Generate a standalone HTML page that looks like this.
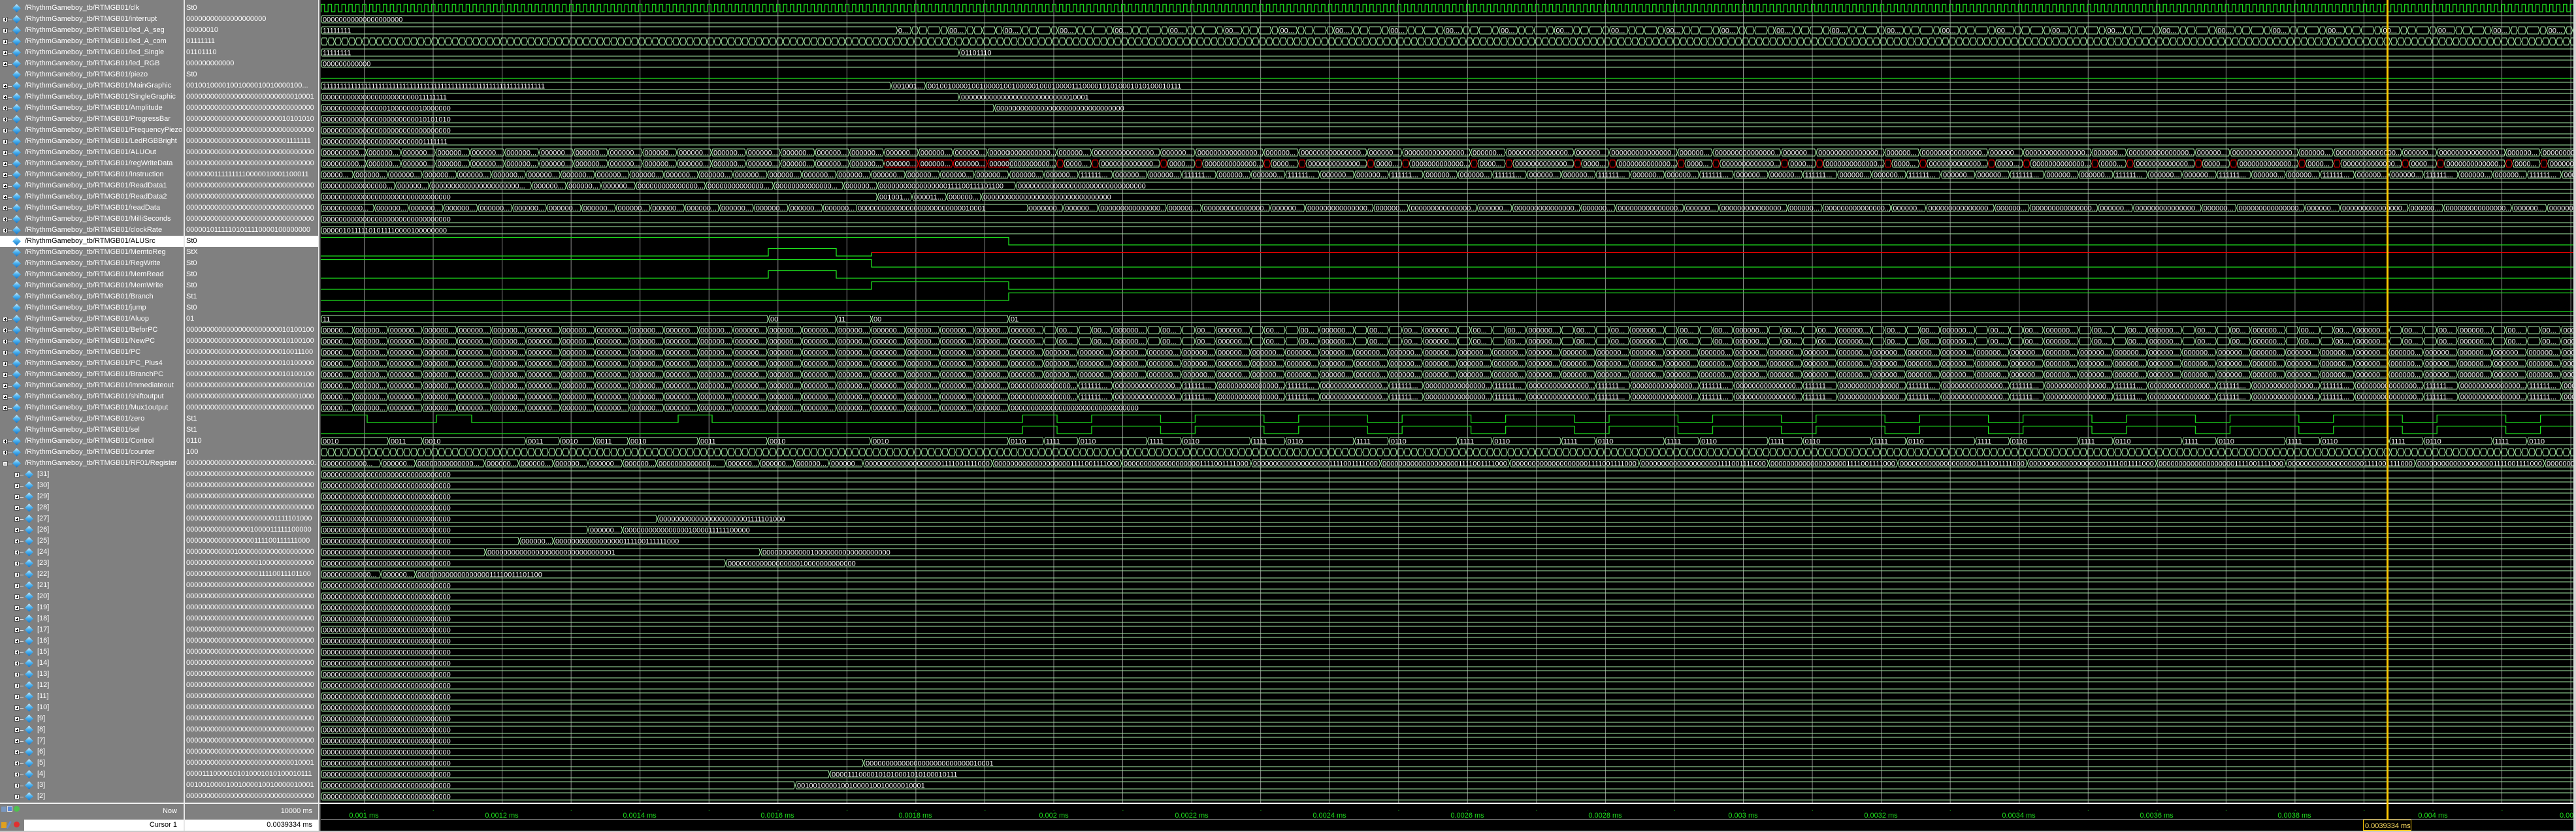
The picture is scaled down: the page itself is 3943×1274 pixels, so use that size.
<!DOCTYPE html>
<html><head><meta charset="utf-8">
<style>
*{margin:0;padding:0;box-sizing:border-box}
body{width:3943px;height:1274px;background:#808080;position:relative;overflow:hidden;font-family:"Liberation Sans",sans-serif}
.np{position:absolute;left:0;top:0;width:281px;height:1229px;background:#808080}
.vp{position:absolute;left:283px;top:0;width:204px;height:1229px;background:#808080}
.sep1{position:absolute;left:281px;top:0;width:2px;height:1274px;background:#e8e8e8}
.sep2{position:absolute;left:487px;top:0;width:2px;height:1274px;background:#e8e8e8}
.sep3{position:absolute;left:489px;top:0;width:2px;height:1274px;background:#404040}
.r{position:absolute;left:0;width:281px;height:17px}
.r span{position:absolute;left:38px;top:1px;font-size:11px;line-height:15px;color:#fff;white-space:nowrap}
.r.s span{left:57px}
.p{position:absolute;left:4px;top:5px;width:8px;height:8px;background:#fff;border:1px solid #555}
.p::before{content:"";position:absolute;left:1px;top:2.5px;width:4px;height:1px;background:#000}
.p::after{content:"";position:absolute;left:2.5px;top:1px;width:1px;height:4px;background:#000}
.p.m::after{display:none}
.p i{position:absolute;left:7px;top:3px;width:6px;height:1px;background:#ddd}
.s .p{left:22px}
.d{position:absolute;left:21px;top:4px;width:9px;height:9px;transform:rotate(45deg);background:linear-gradient(135deg,#d8f2ff 0%,#4db3f0 45%,#1673c4 100%)}
.s .d{left:40px}
.v{position:absolute;left:285px;width:200px;height:17px;font-size:11px;line-height:15px;color:#fff;white-space:nowrap;overflow:hidden;padding-top:1px}
.sel{background:#fff}
.sel span{color:#000!important}
.vsel{background:#fff;color:#000;left:283px;width:204px;padding-left:2px}
.bot{position:absolute;left:0;width:3943px}
svg{position:absolute;left:0;top:0}
.t{font-family:"Liberation Sans",sans-serif;font-size:11px;fill:#fff}
.b{fill:none;stroke:#a8eea8;stroke-width:1}
.rd{fill:none;stroke:#f00000;stroke-width:1}
.g{fill:none;stroke:#1ee01e;stroke-width:1.3}
</style></head><body>
<div class="np"></div><div class="vp"></div>

<!-- names -->
<div class="r" style="top:4px"><i class="d"></i><span>/RhythmGameboy_tb/RTMGB01/clk</span></div>
<div class="r" style="top:21px"><i class="p"><i></i></i><i class="d"></i><span>/RhythmGameboy_tb/RTMGB01/interrupt</span></div>
<div class="r" style="top:38px"><i class="p"><i></i></i><i class="d"></i><span>/RhythmGameboy_tb/RTMGB01/led_A_seg</span></div>
<div class="r" style="top:55px"><i class="p"><i></i></i><i class="d"></i><span>/RhythmGameboy_tb/RTMGB01/led_A_com</span></div>
<div class="r" style="top:72px"><i class="p"><i></i></i><i class="d"></i><span>/RhythmGameboy_tb/RTMGB01/led_Single</span></div>
<div class="r" style="top:89px"><i class="p"><i></i></i><i class="d"></i><span>/RhythmGameboy_tb/RTMGB01/led_RGB</span></div>
<div class="r" style="top:106px"><i class="d"></i><span>/RhythmGameboy_tb/RTMGB01/piezo</span></div>
<div class="r" style="top:123px"><i class="p"><i></i></i><i class="d"></i><span>/RhythmGameboy_tb/RTMGB01/MainGraphic</span></div>
<div class="r" style="top:140px"><i class="p"><i></i></i><i class="d"></i><span>/RhythmGameboy_tb/RTMGB01/SingleGraphic</span></div>
<div class="r" style="top:157px"><i class="p"><i></i></i><i class="d"></i><span>/RhythmGameboy_tb/RTMGB01/Amplitude</span></div>
<div class="r" style="top:174px"><i class="p"><i></i></i><i class="d"></i><span>/RhythmGameboy_tb/RTMGB01/ProgressBar</span></div>
<div class="r" style="top:191px"><i class="p"><i></i></i><i class="d"></i><span>/RhythmGameboy_tb/RTMGB01/FrequencyPiezo</span></div>
<div class="r" style="top:208px"><i class="p"><i></i></i><i class="d"></i><span>/RhythmGameboy_tb/RTMGB01/LedRGBBright</span></div>
<div class="r" style="top:225px"><i class="p"><i></i></i><i class="d"></i><span>/RhythmGameboy_tb/RTMGB01/ALUOut</span></div>
<div class="r" style="top:242px"><i class="p"><i></i></i><i class="d"></i><span>/RhythmGameboy_tb/RTMGB01/regWriteData</span></div>
<div class="r" style="top:259px"><i class="p"><i></i></i><i class="d"></i><span>/RhythmGameboy_tb/RTMGB01/Instruction</span></div>
<div class="r" style="top:276px"><i class="p"><i></i></i><i class="d"></i><span>/RhythmGameboy_tb/RTMGB01/ReadData1</span></div>
<div class="r" style="top:293px"><i class="p"><i></i></i><i class="d"></i><span>/RhythmGameboy_tb/RTMGB01/ReadData2</span></div>
<div class="r" style="top:310px"><i class="p"><i></i></i><i class="d"></i><span>/RhythmGameboy_tb/RTMGB01/readData</span></div>
<div class="r" style="top:327px"><i class="p"><i></i></i><i class="d"></i><span>/RhythmGameboy_tb/RTMGB01/MilliSeconds</span></div>
<div class="r" style="top:344px"><i class="p"><i></i></i><i class="d"></i><span>/RhythmGameboy_tb/RTMGB01/clockRate</span></div>
<div class="r sel" style="top:361px"><i class="d"></i><span>/RhythmGameboy_tb/RTMGB01/ALUSrc</span></div>
<div class="r" style="top:378px"><i class="d"></i><span>/RhythmGameboy_tb/RTMGB01/MemtoReg</span></div>
<div class="r" style="top:395px"><i class="d"></i><span>/RhythmGameboy_tb/RTMGB01/RegWrite</span></div>
<div class="r" style="top:412px"><i class="d"></i><span>/RhythmGameboy_tb/RTMGB01/MemRead</span></div>
<div class="r" style="top:429px"><i class="d"></i><span>/RhythmGameboy_tb/RTMGB01/MemWrite</span></div>
<div class="r" style="top:446px"><i class="d"></i><span>/RhythmGameboy_tb/RTMGB01/Branch</span></div>
<div class="r" style="top:463px"><i class="d"></i><span>/RhythmGameboy_tb/RTMGB01/jump</span></div>
<div class="r" style="top:480px"><i class="p"><i></i></i><i class="d"></i><span>/RhythmGameboy_tb/RTMGB01/Aluop</span></div>
<div class="r" style="top:497px"><i class="p"><i></i></i><i class="d"></i><span>/RhythmGameboy_tb/RTMGB01/BeforPC</span></div>
<div class="r" style="top:514px"><i class="p"><i></i></i><i class="d"></i><span>/RhythmGameboy_tb/RTMGB01/NewPC</span></div>
<div class="r" style="top:531px"><i class="p"><i></i></i><i class="d"></i><span>/RhythmGameboy_tb/RTMGB01/PC</span></div>
<div class="r" style="top:548px"><i class="p"><i></i></i><i class="d"></i><span>/RhythmGameboy_tb/RTMGB01/PC_Plus4</span></div>
<div class="r" style="top:565px"><i class="p"><i></i></i><i class="d"></i><span>/RhythmGameboy_tb/RTMGB01/BranchPC</span></div>
<div class="r" style="top:582px"><i class="p"><i></i></i><i class="d"></i><span>/RhythmGameboy_tb/RTMGB01/immediateout</span></div>
<div class="r" style="top:599px"><i class="p"><i></i></i><i class="d"></i><span>/RhythmGameboy_tb/RTMGB01/shiftoutput</span></div>
<div class="r" style="top:616px"><i class="p"><i></i></i><i class="d"></i><span>/RhythmGameboy_tb/RTMGB01/Mux1output</span></div>
<div class="r" style="top:633px"><i class="d"></i><span>/RhythmGameboy_tb/RTMGB01/zero</span></div>
<div class="r" style="top:650px"><i class="d"></i><span>/RhythmGameboy_tb/RTMGB01/sel</span></div>
<div class="r" style="top:667px"><i class="p"><i></i></i><i class="d"></i><span>/RhythmGameboy_tb/RTMGB01/Control</span></div>
<div class="r" style="top:684px"><i class="p"><i></i></i><i class="d"></i><span>/RhythmGameboy_tb/RTMGB01/counter</span></div>
<div class="r" style="top:701px"><i class="p m"><i></i></i><i class="d"></i><span>/RhythmGameboy_tb/RTMGB01/RF01/Register</span></div>
<div class="r s" style="top:718px"><i class="p"><i></i></i><i class="d"></i><span>[31]</span></div>
<div class="r s" style="top:735px"><i class="p"><i></i></i><i class="d"></i><span>[30]</span></div>
<div class="r s" style="top:752px"><i class="p"><i></i></i><i class="d"></i><span>[29]</span></div>
<div class="r s" style="top:769px"><i class="p"><i></i></i><i class="d"></i><span>[28]</span></div>
<div class="r s" style="top:786px"><i class="p"><i></i></i><i class="d"></i><span>[27]</span></div>
<div class="r s" style="top:803px"><i class="p"><i></i></i><i class="d"></i><span>[26]</span></div>
<div class="r s" style="top:820px"><i class="p"><i></i></i><i class="d"></i><span>[25]</span></div>
<div class="r s" style="top:837px"><i class="p"><i></i></i><i class="d"></i><span>[24]</span></div>
<div class="r s" style="top:854px"><i class="p"><i></i></i><i class="d"></i><span>[23]</span></div>
<div class="r s" style="top:871px"><i class="p"><i></i></i><i class="d"></i><span>[22]</span></div>
<div class="r s" style="top:888px"><i class="p"><i></i></i><i class="d"></i><span>[21]</span></div>
<div class="r s" style="top:905px"><i class="p"><i></i></i><i class="d"></i><span>[20]</span></div>
<div class="r s" style="top:922px"><i class="p"><i></i></i><i class="d"></i><span>[19]</span></div>
<div class="r s" style="top:939px"><i class="p"><i></i></i><i class="d"></i><span>[18]</span></div>
<div class="r s" style="top:956px"><i class="p"><i></i></i><i class="d"></i><span>[17]</span></div>
<div class="r s" style="top:973px"><i class="p"><i></i></i><i class="d"></i><span>[16]</span></div>
<div class="r s" style="top:990px"><i class="p"><i></i></i><i class="d"></i><span>[15]</span></div>
<div class="r s" style="top:1007px"><i class="p"><i></i></i><i class="d"></i><span>[14]</span></div>
<div class="r s" style="top:1024px"><i class="p"><i></i></i><i class="d"></i><span>[13]</span></div>
<div class="r s" style="top:1041px"><i class="p"><i></i></i><i class="d"></i><span>[12]</span></div>
<div class="r s" style="top:1058px"><i class="p"><i></i></i><i class="d"></i><span>[11]</span></div>
<div class="r s" style="top:1075px"><i class="p"><i></i></i><i class="d"></i><span>[10]</span></div>
<div class="r s" style="top:1092px"><i class="p"><i></i></i><i class="d"></i><span>[9]</span></div>
<div class="r s" style="top:1109px"><i class="p"><i></i></i><i class="d"></i><span>[8]</span></div>
<div class="r s" style="top:1126px"><i class="p"><i></i></i><i class="d"></i><span>[7]</span></div>
<div class="r s" style="top:1143px"><i class="p"><i></i></i><i class="d"></i><span>[6]</span></div>
<div class="r s" style="top:1160px"><i class="p"><i></i></i><i class="d"></i><span>[5]</span></div>
<div class="r s" style="top:1177px"><i class="p"><i></i></i><i class="d"></i><span>[4]</span></div>
<div class="r s" style="top:1194px"><i class="p"><i></i></i><i class="d"></i><span>[3]</span></div>
<div class="r s" style="top:1211px"><i class="p"><i></i></i><i class="d"></i><span>[2]</span></div>

<!-- values -->
<div class="v" style="top:4px">St0</div>
<div class="v" style="top:21px">00000000000000000000</div>
<div class="v" style="top:38px">00000010</div>
<div class="v" style="top:55px">01111111</div>
<div class="v" style="top:72px">01101110</div>
<div class="v" style="top:89px">000000000000</div>
<div class="v" style="top:106px">St0</div>
<div class="v" style="top:123px">00100100001001000010010000100...</div>
<div class="v" style="top:140px">00000000000000000000000000010001</div>
<div class="v" style="top:157px">00000000000000000000000000000000</div>
<div class="v" style="top:174px">00000000000000000000000010101010</div>
<div class="v" style="top:191px">00000000000000000000000000000000</div>
<div class="v" style="top:208px">00000000000000000000000001111111</div>
<div class="v" style="top:225px">00000000000000000000000000000000</div>
<div class="v" style="top:242px">00000000000000000000000000000000</div>
<div class="v" style="top:259px">00000001111111110000010001100011</div>
<div class="v" style="top:276px">00000000000000000000000000000000</div>
<div class="v" style="top:293px">00000000000000000000000000000000</div>
<div class="v" style="top:310px">00000000000000000000000000000000</div>
<div class="v" style="top:327px">00000000000000000000000000000000</div>
<div class="v" style="top:344px">00000101111101011110000100000000</div>
<div class="v vsel" style="top:361px">St0</div>
<div class="v" style="top:378px">StX</div>
<div class="v" style="top:395px">St0</div>
<div class="v" style="top:412px">St0</div>
<div class="v" style="top:429px">St0</div>
<div class="v" style="top:446px">St1</div>
<div class="v" style="top:463px">St0</div>
<div class="v" style="top:480px">01</div>
<div class="v" style="top:497px">00000000000000000000000010100100</div>
<div class="v" style="top:514px">00000000000000000000000010100100</div>
<div class="v" style="top:531px">00000000000000000000000010011100</div>
<div class="v" style="top:548px">00000000000000000000000010100000</div>
<div class="v" style="top:565px">00000000000000000000000010100100</div>
<div class="v" style="top:582px">00000000000000000000000000000100</div>
<div class="v" style="top:599px">00000000000000000000000000001000</div>
<div class="v" style="top:616px">00000000000000000000000000000000</div>
<div class="v" style="top:633px">St1</div>
<div class="v" style="top:650px">St1</div>
<div class="v" style="top:667px">0110</div>
<div class="v" style="top:684px">100</div>
<div class="v" style="top:701px">00000000000000000000000000000000...</div>
<div class="v" style="top:718px">00000000000000000000000000000000</div>
<div class="v" style="top:735px">00000000000000000000000000000000</div>
<div class="v" style="top:752px">00000000000000000000000000000000</div>
<div class="v" style="top:769px">00000000000000000000000000000000</div>
<div class="v" style="top:786px">00000000000000000000001111101000</div>
<div class="v" style="top:803px">00000000000000001000011111100000</div>
<div class="v" style="top:820px">00000000000000000111100111111000</div>
<div class="v" style="top:837px">00000000000010000000000000000000</div>
<div class="v" style="top:854px">00000000000000000010000000000000</div>
<div class="v" style="top:871px">00000000000000000011110011101100</div>
<div class="v" style="top:888px">00000000000000000000000000000000</div>
<div class="v" style="top:905px">00000000000000000000000000000000</div>
<div class="v" style="top:922px">00000000000000000000000000000000</div>
<div class="v" style="top:939px">00000000000000000000000000000000</div>
<div class="v" style="top:956px">00000000000000000000000000000000</div>
<div class="v" style="top:973px">00000000000000000000000000000000</div>
<div class="v" style="top:990px">00000000000000000000000000000000</div>
<div class="v" style="top:1007px">00000000000000000000000000000000</div>
<div class="v" style="top:1024px">00000000000000000000000000000000</div>
<div class="v" style="top:1041px">00000000000000000000000000000000</div>
<div class="v" style="top:1058px">00000000000000000000000000000000</div>
<div class="v" style="top:1075px">00000000000000000000000000000000</div>
<div class="v" style="top:1092px">00000000000000000000000000000000</div>
<div class="v" style="top:1109px">00000000000000000000000000000000</div>
<div class="v" style="top:1126px">00000000000000000000000000000000</div>
<div class="v" style="top:1143px">00000000000000000000000000000000</div>
<div class="v" style="top:1160px">00000000000000000000000000010001</div>
<div class="v" style="top:1177px">00001110000101010001010100010111</div>
<div class="v" style="top:1194px">00100100001001000010010000010001</div>
<div class="v" style="top:1211px">00000000000000000000000000000000</div>

<div class="sep1"></div><div class="sep2"></div><div class="sep3"></div>

<!-- bottom left -->
<div class="bot" style="top:1229px;height:2px;background:#f0f0f0"></div>
<div style="position:absolute;left:0;top:1231px;width:281px;height:23px;background:#808080"></div>
<div style="position:absolute;left:0;top:1236px;width:271px;text-align:right;font-size:11px;color:#fff">Now</div>
<div style="position:absolute;left:283px;top:1231px;width:204px;height:23px;background:#808080"></div>
<div style="position:absolute;left:283px;top:1236px;width:195px;text-align:right;font-size:11px;color:#fff">10000 ms</div>
<div style="position:absolute;left:2px;top:1235px;width:8px;height:8px;background:#7a98c0"></div>
<div style="position:absolute;left:11px;top:1234px;width:8px;height:9px;background:#5a88d8;border:1px solid #ddd"></div>
<div style="position:absolute;left:21px;top:1234px;width:9px;height:9px;border-radius:50%;background:#50c050"></div>
<div style="position:absolute;left:0;top:1254px;width:281px;height:18px;background:#808080"></div>
<div style="position:absolute;left:2px;top:1259px;width:8px;height:9px;background:#e0a020"></div>
<div style="position:absolute;left:12px;top:1257px;width:3px;height:12px;background:#6688cc;transform:rotate(30deg)"></div>
<div style="position:absolute;left:21px;top:1258px;width:9px;height:9px;border-radius:50%;background:#e03030"></div>
<div style="position:absolute;left:37px;top:1255px;width:244px;height:17px;background:#fff"></div>
<div style="position:absolute;left:37px;top:1257px;width:234px;text-align:right;font-size:11px;color:#000">Cursor 1</div>
<div style="position:absolute;left:283px;top:1255px;width:204px;height:17px;background:#fff"></div>
<div style="position:absolute;left:283px;top:1257px;width:195px;text-align:right;font-size:11px;color:#000">0.0039334 ms</div>
<div class="bot" style="top:1272px;height:2px;background:#c8c8c8"></div>

<svg width="3943" height="1274" viewBox="0 0 3943 1274" style="left:0;top:0">
<defs>
<clipPath id="wc"><rect x="491" y="0" width="3448" height="1229"/></clipPath>
<pattern id="pGrid" patternUnits="userSpaceOnUse" x="557" y="0" width="105.55" height="1229"><rect x="0" y="0" width="1" height="1229" fill="#8c8c8c"/></pattern>
<pattern id="pClk" patternUnits="userSpaceOnUse" x="491" y="0" width="10.56" height="17"><path class="g" d="M-1,14H0.6V2.5H5.9V14H12"/></pattern>
<pattern id="pCom" patternUnits="userSpaceOnUse" x="491" y="0" width="10.56" height="17"><path class="b" d="M0.5,8.5L2,3H8.56L10.06,8.5L8.56,14H2Z"/></pattern>
<pattern id="pA" patternUnits="userSpaceOnUse" x="561" y="0" width="52.8" height="17"><path class="b" d="M0.5,8.5L2,3H50.8L52.3,8.5L50.8,14H2Z"/><text class="t" x="3" y="12.3">000000...</text></pattern>
<pattern id="pARed" patternUnits="userSpaceOnUse" x="561" y="0" width="52.8" height="17"><path class="rd" d="M0.5,8.5L2,3H50.8L52.3,8.5L50.8,14H2Z"/><text class="t" x="3" y="12.3">000000...</text></pattern>
<pattern id="pB" patternUnits="userSpaceOnUse" x="541" y="0" width="52.8" height="17"><path class="b" d="M0.5,8.5L2,3H50.8L52.3,8.5L50.8,14H2Z"/><text class="t" x="3" y="12.3">000000...</text></pattern>
<pattern id="pC" patternUnits="userSpaceOnUse" x="573" y="0" width="52.8" height="17"><path class="b" d="M0.5,8.5L2,3H50.8L52.3,8.5L50.8,14H2Z"/><text class="t" x="3" y="12.3">000000...</text></pattern>
<pattern id="pSeg" patternUnits="userSpaceOnUse" x="2547.3" y="0" width="84.4" height="17"><path class="b" d="M0.5,8.5L2,3H27.5L29,8.5L27.5,14H2Z M30,8.5L31.5,3H38.2L39.7,8.5L38.2,14H31.5Z M40.7,8.5L42.2,3H51.6L53.1,8.5L51.6,14H42.2Z M54.1,8.5L55.6,3H72.1L73.6,8.5L72.1,14H55.6Z M74.6,8.5L76.1,3H82.4L83.9,8.5L82.4,14H76.1Z"/><text class="t" x="3" y="12.3">00...</text></pattern>
<pattern id="pR13" patternUnits="userSpaceOnUse" x="2567.8" y="0" width="158.4" height="17"><path class="b" d="M0.5,8.5L2,3H51.6L53.1,8.5L51.6,14H2Z M54.1,8.5L55.6,3H156.4L157.9,8.5L156.4,14H55.6Z"/><text class="t" x="3" y="12.3">000000...</text><text class="t" x="57" y="12.3">000000000000000...</text></pattern>
<pattern id="pR14" patternUnits="userSpaceOnUse" x="2567.8" y="0" width="158.4" height="17"><path class="rd" d="M0.5,8.5L2,3H8.7L10.2,8.5L8.7,14H2Z M54.1,8.5L55.6,3H62.3L63.8,8.5L62.3,14H55.6Z"/><path class="b" d="M11.2,8.5L12.7,3H51.6L53.1,8.5L51.6,14H12.7Z M64.8,8.5L66.3,3H156.4L157.9,8.5L156.4,14H66.3Z"/><text class="t" x="14" y="12.3">0000...</text><text class="t" x="68" y="12.3">0000000000000...</text></pattern>
<pattern id="pR15" patternUnits="userSpaceOnUse" x="2548.2" y="0" width="158.4" height="17"><path class="b" d="M0.5,8.5L2,3H50.8L52.3,8.5L50.8,14H2Z M53.3,8.5L54.8,3H103.6L105.1,8.5L103.6,14H54.8Z M106.1,8.5L107.6,3H156.4L157.9,8.5L156.4,14H107.6Z"/><text class="t" x="3" y="12.3">000000...</text><text class="t" x="56" y="12.3">111111...</text><text class="t" x="109" y="12.3">000000...</text></pattern>
<pattern id="pR18" patternUnits="userSpaceOnUse" x="2577.7" y="0" width="158.4" height="17"><path class="b" d="M0.5,8.5L2,3H51.6L53.1,8.5L51.6,14H2Z M54.1,8.5L55.6,3H156.4L157.9,8.5L156.4,14H55.6Z"/><text class="t" x="3" y="12.3">000000...</text><text class="t" x="57" y="12.3">000000000000000...</text></pattern>
<pattern id="pR29" patternUnits="userSpaceOnUse" x="2548.2" y="0" width="158.4" height="17"><path class="b" d="M0.5,8.5L2,3H17.6L19.1,8.5L17.6,14H2Z M20.1,8.5L21.6,3H50.8L52.3,8.5L50.8,14H21.6Z M53.3,8.5L54.8,3H71.2L72.7,8.5L71.2,14H54.8Z M73.7,8.5L75.2,3H102.5L104,8.5L102.5,14H75.2Z M105,8.5L106.5,3H156.4L157.9,8.5L156.4,14H106.5Z"/><text class="t" x="23" y="12.3">00...</text><text class="t" x="76" y="12.3">00...</text><text class="t" x="108" y="12.3">000000...</text></pattern>
<pattern id="pR34" patternUnits="userSpaceOnUse" x="2601" y="0" width="158.4" height="17"><path class="b" d="M0.5,8.5L2,3H50.8L52.3,8.5L50.8,14H2Z M53.3,8.5L54.8,3H156.4L157.9,8.5L156.4,14H54.8Z"/><text class="t" x="3" y="12.3">111111...</text><text class="t" x="56" y="12.3">000000000000000...</text></pattern>
<pattern id="pR37" patternUnits="userSpaceOnUse" x="2567.8" y="0" width="158.4" height="17"><path class="g" d="M-1,2.5H0.6V14H53.6V2.5H160"/></pattern>
<pattern id="pR39" patternUnits="userSpaceOnUse" x="2548.2" y="0" width="158.4" height="17"><path class="b" d="M0.5,8.5L2,3H50.8L52.3,8.5L50.8,14H2Z M53.3,8.5L54.8,3H156.4L157.9,8.5L156.4,14H54.8Z"/><text class="t" x="3" y="12.3">1111</text><text class="t" x="56" y="12.3">0110</text></pattern>
<pattern id="pR41" patternUnits="userSpaceOnUse" x="1321" y="0" width="198" height="17"><path class="b" d="M0.5,8.5L2,3H196L197.5,8.5L196,14H2Z"/><text class="t" x="3" y="12.3">00000000000000000001111001111000</text></pattern>
<pattern id="pMin" patternUnits="userSpaceOnUse" x="557" y="0" width="21.11" height="20"><rect x="0" y="0" width="1" height="4" fill="#1ee01e"/></pattern>
<pattern id="pMaj" patternUnits="userSpaceOnUse" x="557" y="0" width="105.55" height="20"><rect x="0" y="0" width="1.5" height="9" fill="#1ee01e"/></pattern>
</defs>

<rect x="491" y="0" width="3448" height="1229" fill="#000"/>
<rect x="491" y="1231" width="3448" height="23" fill="#000"/>
<rect x="491" y="1254" width="3448" height="1" fill="#909090"/>
<rect x="491" y="1255" width="3448" height="17" fill="#000"/>
<rect x="3939" y="0" width="4" height="1274" fill="#d4d4d4"/>
<rect x="491" y="0" width="3448" height="1229" fill="url(#pGrid)"/>

<g clip-path="url(#wc)">
<g transform="translate(0,4)"><rect x="491" y="0" width="3448" height="17" fill="url(#pClk)"/></g>
<g transform="translate(0,21)"><path class="b" d="M491.5,8.5L493,3H3945V14H493Z"/><text class="t" x="494" y="12.3">00000000000000000000</text></g>
<g transform="translate(0,38)"><path class="b" d="M491.5,8.5L493,3H1372L1373.5,8.5L1372,14H493Z"/><text class="t" x="494" y="12.3">11111111</text><rect x="1374" y="0" width="2570" height="17" fill="url(#pSeg)"/></g>
<g transform="translate(0,55)"><rect x="491" y="0" width="3448" height="17" fill="url(#pCom)"/></g>
<g transform="translate(0,72)"><path class="b" d="M491.5,8.5L493,3H1466L1467.5,8.5L1466,14H493Z M1468.5,8.5L1470,3H3945V14H1470Z"/><text class="t" x="494" y="12.3">11111111</text><text class="t" x="1471" y="12.3">01101110</text></g>
<g transform="translate(0,89)"><path class="b" d="M491.5,8.5L493,3H3945V14H493Z"/><text class="t" x="494" y="12.3">000000000000</text></g>
<g transform="translate(0,106)"><path class="g" d="M491,14H3945"/></g>
<g transform="translate(0,123)"><path class="b" d="M491.5,8.5L493,3H1362L1363.5,8.5L1362,14H493Z M1364.5,8.5L1366,3H1415L1416.5,8.5L1415,14H1366Z M1417.5,8.5L1419,3H3945V14H1419Z"/><text class="t" x="494" y="12.3">1111111111111111111111111111111111111111111111111111111111111111</text><text class="t" x="1367" y="12.3">001001...</text><text class="t" x="1420" y="12.3">0010010000100100001001000001000100001110000101010001010100010111</text></g>
<g transform="translate(0,140)"><path class="b" d="M491.5,8.5L493,3H1466L1467.5,8.5L1466,14H493Z M1468.5,8.5L1470,3H3945V14H1470Z"/><text class="t" x="494" y="12.3">00000000000000000000000011111111</text><text class="t" x="1471" y="12.3">00000000000000000000000000010001</text></g>
<g transform="translate(0,157)"><path class="b" d="M491.5,8.5L493,3H1520L1521.5,8.5L1520,14H493Z M1522.5,8.5L1524,3H3945V14H1524Z"/><text class="t" x="494" y="12.3">00000000000000001000000010000000</text><text class="t" x="1525" y="12.3">00000000000000000000000000000000</text></g>
<g transform="translate(0,174)"><path class="b" d="M491.5,8.5L493,3H3945V14H493Z"/><text class="t" x="494" y="12.3">00000000000000000000000010101010</text></g>
<g transform="translate(0,191)"><path class="b" d="M491.5,8.5L493,3H3945V14H493Z"/><text class="t" x="494" y="12.3">00000000000000000000000000000000</text></g>
<g transform="translate(0,208)"><path class="b" d="M491.5,8.5L493,3H3945V14H493Z"/><text class="t" x="494" y="12.3">00000000000000000000000001111111</text></g>
<g transform="translate(0,225)"><path class="b" d="M491.5,8.5L493,3H559L560.5,8.5L559,14H493Z"/><text class="t" x="494" y="12.3">000000000...</text><rect x="561" y="0" width="983" height="17" fill="url(#pA)"/><rect x="1544" y="0" width="2395" height="17" fill="url(#pR13)"/></g>
<g transform="translate(0,242)"><path class="b" d="M491.5,8.5L493,3H559L560.5,8.5L559,14H493Z"/><text class="t" x="494" y="12.3">000000000...</text><rect x="561" y="0" width="793" height="17" fill="url(#pA)"/><rect x="1354" y="0" width="190" height="17" fill="url(#pARed)"/><rect x="1544" y="0" width="2395" height="17" fill="url(#pR14)"/></g>
<g transform="translate(0,259)"><path class="b" d="M491.5,8.5L493,3H539L540.5,8.5L539,14H493Z"/><text class="t" x="494" y="12.3">00000...</text><rect x="541" y="0" width="1003" height="17" fill="url(#pB)"/><rect x="1544" y="0" width="2395" height="17" fill="url(#pR15)"/></g>
<g transform="translate(0,276)"><path class="b" d="M491.5,8.5L493,3H603L604.5,8.5L603,14H493Z M605.5,8.5L607,3H655L656.5,8.5L655,14H607Z M657.5,8.5L659,3H812L813.5,8.5L812,14H659Z M814.5,8.5L816,3H865L866.5,8.5L865,14H816Z M867.5,8.5L869,3H918L919.5,8.5L918,14H869Z M920.5,8.5L922,3H971L972.5,8.5L971,14H922Z M973.5,8.5L975,3H1078L1079.5,8.5L1078,14H975Z M1080.5,8.5L1082,3H1182L1183.5,8.5L1182,14H1082Z M1184.5,8.5L1186,3H1289L1290.5,8.5L1289,14H1186Z M1291.5,8.5L1293,3H1341L1342.5,8.5L1341,14H1293Z M1343.5,8.5L1345,3H1553L1554.5,8.5L1553,14H1345Z M1555.5,8.5L1557,3H3945V14H1557Z"/><text class="t" x="494" y="12.3">0000000000000000...</text><text class="t" x="608" y="12.3">000000...</text><text class="t" x="660" y="12.3">0000000000000000000000...</text><text class="t" x="817" y="12.3">000000...</text><text class="t" x="870" y="12.3">000000...</text><text class="t" x="923" y="12.3">000000...</text><text class="t" x="976" y="12.3">000000000000000...</text><text class="t" x="1083" y="12.3">00000000000000...</text><text class="t" x="1187" y="12.3">00000000000000...</text><text class="t" x="1294" y="12.3">000000...</text><text class="t" x="1346" y="12.3">00000000000000000111100111101100</text><text class="t" x="1558" y="12.3">00000000000000000000000000000000</text></g>
<g transform="translate(0,293)"><path class="b" d="M491.5,8.5L493,3H1341L1342.5,8.5L1341,14H493Z M1343.5,8.5L1345,3H1394L1395.5,8.5L1394,14H1345Z M1396.5,8.5L1398,3H1447L1448.5,8.5L1447,14H1398Z M1449.5,8.5L1451,3H1500L1501.5,8.5L1500,14H1451Z M1502.5,8.5L1504,3H3945V14H1504Z"/><text class="t" x="494" y="12.3">00000000000000000000000000000000</text><text class="t" x="1346" y="12.3">001001...</text><text class="t" x="1399" y="12.3">000011...</text><text class="t" x="1452" y="12.3">000000...</text><text class="t" x="1505" y="12.3">00000000000000000000000000000000</text></g>
<g transform="translate(0,310)"><path class="b" d="M491.5,8.5L493,3H571L572.5,8.5L571,14H493Z M1310.5,8.5L1312,3H1572L1573.5,8.5L1572,14H1312Z"/><text class="t" x="494" y="12.3">0000000000...</text><rect x="573" y="0" width="737" height="17" fill="url(#pC)"/><text class="t" x="1313" y="12.3">00000000000000000000000000010001</text><rect x="1574" y="0" width="2365" height="17" fill="url(#pR18)"/></g>
<g transform="translate(0,327)"><path class="b" d="M491.5,8.5L493,3H3945V14H493Z"/><text class="t" x="494" y="12.3">00000000000000000000000000000000</text></g>
<g transform="translate(0,344)"><path class="b" d="M491.5,8.5L493,3H3945V14H493Z"/><text class="t" x="494" y="12.3">00000101111101011110000100000000</text></g>
<g transform="translate(0,361)"><path class="g" d="M491,2.5H1544V14H3945"/></g>
<g transform="translate(0,378)"><path class="g" d="M491,14H1176V2.5H1280V14H1334V8.5"/><path class="rd" d="M1334,8.5H3945"/></g>
<g transform="translate(0,395)"><path class="g" d="M491,2.5H1334V14H3945"/></g>
<g transform="translate(0,412)"><path class="g" d="M491,14H1176V2.5H1280V14H3945"/></g>
<g transform="translate(0,429)"><path class="g" d="M491,14H1334V2.5H1544V14H3945"/></g>
<g transform="translate(0,446)"><path class="g" d="M491,14H1544V2.5H3945"/></g>
<g transform="translate(0,463)"><path class="g" d="M491,14H3945"/></g>
<g transform="translate(0,480)"><path class="b" d="M491.5,8.5L493,3H1174L1175.5,8.5L1174,14H493Z M1176.5,8.5L1178,3H1278L1279.5,8.5L1278,14H1178Z M1280.5,8.5L1282,3H1332L1333.5,8.5L1332,14H1282Z M1334.5,8.5L1336,3H1542L1543.5,8.5L1542,14H1336Z M1544.5,8.5L1546,3H3945V14H1546Z"/><text class="t" x="494" y="12.3">11</text><text class="t" x="1179" y="12.3">00</text><text class="t" x="1283" y="12.3">11</text><text class="t" x="1337" y="12.3">00</text><text class="t" x="1547" y="12.3">01</text></g>
<g transform="translate(0,497)"><path class="b" d="M491.5,8.5L493,3H539L540.5,8.5L539,14H493Z"/><text class="t" x="494" y="12.3">00000...</text><rect x="541" y="0" width="1003" height="17" fill="url(#pB)"/><rect x="1544" y="0" width="2395" height="17" fill="url(#pR29)"/></g>
<g transform="translate(0,514)"><path class="b" d="M491.5,8.5L493,3H539L540.5,8.5L539,14H493Z"/><text class="t" x="494" y="12.3">00000...</text><rect x="541" y="0" width="1003" height="17" fill="url(#pB)"/><rect x="1544" y="0" width="2395" height="17" fill="url(#pR29)"/></g>
<g transform="translate(0,531)"><path class="b" d="M491.5,8.5L493,3H539L540.5,8.5L539,14H493Z"/><text class="t" x="494" y="12.3">00000...</text><rect x="541" y="0" width="3398" height="17" fill="url(#pB)"/></g>
<g transform="translate(0,548)"><path class="b" d="M491.5,8.5L493,3H539L540.5,8.5L539,14H493Z"/><text class="t" x="494" y="12.3">00000...</text><rect x="541" y="0" width="3398" height="17" fill="url(#pB)"/></g>
<g transform="translate(0,565)"><path class="b" d="M491.5,8.5L493,3H539L540.5,8.5L539,14H493Z"/><text class="t" x="494" y="12.3">00000...</text><rect x="541" y="0" width="3398" height="17" fill="url(#pB)"/></g>
<g transform="translate(0,582)"><path class="b" d="M491.5,8.5L493,3H539L540.5,8.5L539,14H493Z M1544.5,8.5L1546,3H1648L1649.5,8.5L1648,14H1546Z"/><text class="t" x="494" y="12.3">00000...</text><rect x="541" y="0" width="1003" height="17" fill="url(#pB)"/><text class="t" x="1547" y="12.3">000000000000000...</text><rect x="1650" y="0" width="2289" height="17" fill="url(#pR34)"/></g>
<g transform="translate(0,599)"><path class="b" d="M491.5,8.5L493,3H539L540.5,8.5L539,14H493Z M1544.5,8.5L1546,3H1648L1649.5,8.5L1648,14H1546Z"/><text class="t" x="494" y="12.3">00000...</text><rect x="541" y="0" width="1003" height="17" fill="url(#pB)"/><text class="t" x="1547" y="12.3">000000000000000...</text><rect x="1650" y="0" width="2289" height="17" fill="url(#pR34)"/></g>
<g transform="translate(0,616)"><path class="b" d="M491.5,8.5L493,3H539L540.5,8.5L539,14H493Z M1544.5,8.5L1546,3H3945V14H1546Z"/><text class="t" x="494" y="12.3">00000...</text><rect x="541" y="0" width="1003" height="17" fill="url(#pB)"/><text class="t" x="1547" y="12.3">00000000000000000000000000000000</text></g>
<g transform="translate(0,633)"><path class="g" d="M491,2.5H562V14H668V2.5H722V14H1038V2.5H1090V14H1565V2.5"/><rect x="1565" y="0" width="2374" height="17" fill="url(#pR37)"/></g>
<g transform="translate(0,650)"><path class="g" d="M491,14H1565V2.5"/><rect x="1565" y="0" width="2374" height="17" fill="url(#pR37)"/></g>
<g transform="translate(0,667)"><path class="b" d="M491.5,8.5L493,3H593L594.5,8.5L593,14H493Z M595.5,8.5L597,3H645L646.5,8.5L645,14H597Z M647.5,8.5L649,3H803L804.5,8.5L803,14H649Z M805.5,8.5L807,3H855L856.5,8.5L855,14H807Z M857.5,8.5L859,3H908L909.5,8.5L908,14H859Z M910.5,8.5L912,3H960L961.5,8.5L960,14H912Z M962.5,8.5L964,3H1067L1068.5,8.5L1067,14H964Z M1069.5,8.5L1071,3H1173L1174.5,8.5L1173,14H1071Z M1175.5,8.5L1177,3H1331L1332.5,8.5L1331,14H1177Z M1333.5,8.5L1335,3H1542L1543.5,8.5L1542,14H1335Z M1544.5,8.5L1546,3H1596L1597.5,8.5L1596,14H1546Z"/><text class="t" x="494" y="12.3">0010</text><text class="t" x="598" y="12.3">0011</text><text class="t" x="650" y="12.3">0010</text><text class="t" x="808" y="12.3">0011</text><text class="t" x="860" y="12.3">0010</text><text class="t" x="913" y="12.3">0011</text><text class="t" x="965" y="12.3">0010</text><text class="t" x="1072" y="12.3">0011</text><text class="t" x="1178" y="12.3">0010</text><text class="t" x="1336" y="12.3">0010</text><text class="t" x="1547" y="12.3">0110</text><rect x="1598" y="0" width="2341" height="17" fill="url(#pR39)"/></g>
<g transform="translate(0,684)"><rect x="491" y="0" width="3448" height="17" fill="url(#pCom)"/></g>
<g transform="translate(0,701)"><path class="b" d="M491.5,8.5L493,3H581L582.5,8.5L581,14H493Z M583.5,8.5L585,3H634L635.5,8.5L634,14H585Z M636.5,8.5L638,3H740L741.5,8.5L740,14H638Z M742.5,8.5L744,3H792L793.5,8.5L792,14H744Z M794.5,8.5L796,3H845L846.5,8.5L845,14H796Z M847.5,8.5L849,3H898L899.5,8.5L898,14H849Z M900.5,8.5L902,3H951L952.5,8.5L951,14H902Z M953.5,8.5L955,3H1003L1004.5,8.5L1003,14H955Z M1005.5,8.5L1007,3H1109L1110.5,8.5L1109,14H1007Z M1111.5,8.5L1113,3H1161L1162.5,8.5L1161,14H1113Z M1163.5,8.5L1165,3H1214L1215.5,8.5L1214,14H1165Z M1216.5,8.5L1218,3H1267L1268.5,8.5L1267,14H1218Z M1269.5,8.5L1271,3H1319L1320.5,8.5L1319,14H1271Z"/><text class="t" x="494" y="12.3">00000000000...</text><text class="t" x="586" y="12.3">000000...</text><text class="t" x="639" y="12.3">00000000000000...</text><text class="t" x="745" y="12.3">000000...</text><text class="t" x="797" y="12.3">000000...</text><text class="t" x="850" y="12.3">000000...</text><text class="t" x="903" y="12.3">000000...</text><text class="t" x="956" y="12.3">000000...</text><text class="t" x="1008" y="12.3">0000000000000...</text><text class="t" x="1114" y="12.3">000000...</text><text class="t" x="1166" y="12.3">000000...</text><text class="t" x="1219" y="12.3">000000...</text><text class="t" x="1272" y="12.3">000000...</text><rect x="1321" y="0" width="2618" height="17" fill="url(#pR41)"/></g>

<!-- registers -->
<g transform="translate(0,718)"><path class="b" d="M491.5,8.5L493,3H3945V14H493Z"/><text class="t" x="494" y="12.3">00000000000000000000000000000000</text></g>
<g transform="translate(0,735)"><path class="b" d="M491.5,8.5L493,3H3945V14H493Z"/><text class="t" x="494" y="12.3">00000000000000000000000000000000</text></g>
<g transform="translate(0,752)"><path class="b" d="M491.5,8.5L493,3H3945V14H493Z"/><text class="t" x="494" y="12.3">00000000000000000000000000000000</text></g>
<g transform="translate(0,769)"><path class="b" d="M491.5,8.5L493,3H3945V14H493Z"/><text class="t" x="494" y="12.3">00000000000000000000000000000000</text></g>
<g transform="translate(0,786)"><path class="b" d="M491.5,8.5L493,3H1004L1005.5,8.5L1004,14H493Z M1006.5,8.5L1008,3H3945V14H1008Z"/><text class="t" x="494" y="12.3">00000000000000000000000000000000</text><text class="t" x="1009" y="12.3">00000000000000000000001111101000</text></g>
<g transform="translate(0,803)"><path class="b" d="M491.5,8.5L493,3H898L899.5,8.5L898,14H493Z M900.5,8.5L902,3H951L952.5,8.5L951,14H902Z M953.5,8.5L955,3H3945V14H955Z"/><text class="t" x="494" y="12.3">00000000000000000000000000000000</text><text class="t" x="903" y="12.3">000000...</text><text class="t" x="956" y="12.3">00000000000000001000011111100000</text></g>
<g transform="translate(0,820)"><path class="b" d="M491.5,8.5L493,3H793L794.5,8.5L793,14H493Z M795.5,8.5L797,3H845L846.5,8.5L845,14H797Z M847.5,8.5L849,3H3945V14H849Z"/><text class="t" x="494" y="12.3">00000000000000000000000000000000</text><text class="t" x="798" y="12.3">000000...</text><text class="t" x="850" y="12.3">00000000000000000111100111111000</text></g>
<g transform="translate(0,837)"><path class="b" d="M491.5,8.5L493,3H741L742.5,8.5L741,14H493Z M743.5,8.5L745,3H1162L1163.5,8.5L1162,14H745Z M1164.5,8.5L1166,3H3945V14H1166Z"/><text class="t" x="494" y="12.3">00000000000000000000000000000000</text><text class="t" x="746" y="12.3">00000000000000000000000000000001</text><text class="t" x="1167" y="12.3">00000000000010000000000000000000</text></g>
<g transform="translate(0,854)"><path class="b" d="M491.5,8.5L493,3H1109L1110.5,8.5L1109,14H493Z M1111.5,8.5L1113,3H3945V14H1113Z"/><text class="t" x="494" y="12.3">00000000000000000000000000000000</text><text class="t" x="1114" y="12.3">00000000000000000010000000000000</text></g>
<g transform="translate(0,871)"><path class="b" d="M491.5,8.5L493,3H581L582.5,8.5L581,14H493Z M583.5,8.5L585,3H634L635.5,8.5L634,14H585Z M636.5,8.5L638,3H3945V14H638Z"/><text class="t" x="494" y="12.3">000000000000...</text><text class="t" x="586" y="12.3">000000...</text><text class="t" x="639" y="12.3">00000000000000000011110011101100</text></g>
<g transform="translate(0,888)"><path class="b" d="M491.5,8.5L493,3H3945V14H493Z"/><text class="t" x="494" y="12.3">00000000000000000000000000000000</text></g>
<g transform="translate(0,905)"><path class="b" d="M491.5,8.5L493,3H3945V14H493Z"/><text class="t" x="494" y="12.3">00000000000000000000000000000000</text></g>
<g transform="translate(0,922)"><path class="b" d="M491.5,8.5L493,3H3945V14H493Z"/><text class="t" x="494" y="12.3">00000000000000000000000000000000</text></g>
<g transform="translate(0,939)"><path class="b" d="M491.5,8.5L493,3H3945V14H493Z"/><text class="t" x="494" y="12.3">00000000000000000000000000000000</text></g>
<g transform="translate(0,956)"><path class="b" d="M491.5,8.5L493,3H3945V14H493Z"/><text class="t" x="494" y="12.3">00000000000000000000000000000000</text></g>
<g transform="translate(0,973)"><path class="b" d="M491.5,8.5L493,3H3945V14H493Z"/><text class="t" x="494" y="12.3">00000000000000000000000000000000</text></g>
<g transform="translate(0,990)"><path class="b" d="M491.5,8.5L493,3H3945V14H493Z"/><text class="t" x="494" y="12.3">00000000000000000000000000000000</text></g>
<g transform="translate(0,1007)"><path class="b" d="M491.5,8.5L493,3H3945V14H493Z"/><text class="t" x="494" y="12.3">00000000000000000000000000000000</text></g>
<g transform="translate(0,1024)"><path class="b" d="M491.5,8.5L493,3H3945V14H493Z"/><text class="t" x="494" y="12.3">00000000000000000000000000000000</text></g>
<g transform="translate(0,1041)"><path class="b" d="M491.5,8.5L493,3H3945V14H493Z"/><text class="t" x="494" y="12.3">00000000000000000000000000000000</text></g>
<g transform="translate(0,1058)"><path class="b" d="M491.5,8.5L493,3H3945V14H493Z"/><text class="t" x="494" y="12.3">00000000000000000000000000000000</text></g>
<g transform="translate(0,1075)"><path class="b" d="M491.5,8.5L493,3H3945V14H493Z"/><text class="t" x="494" y="12.3">00000000000000000000000000000000</text></g>
<g transform="translate(0,1092)"><path class="b" d="M491.5,8.5L493,3H3945V14H493Z"/><text class="t" x="494" y="12.3">00000000000000000000000000000000</text></g>
<g transform="translate(0,1109)"><path class="b" d="M491.5,8.5L493,3H3945V14H493Z"/><text class="t" x="494" y="12.3">00000000000000000000000000000000</text></g>
<g transform="translate(0,1126)"><path class="b" d="M491.5,8.5L493,3H3945V14H493Z"/><text class="t" x="494" y="12.3">00000000000000000000000000000000</text></g>
<g transform="translate(0,1143)"><path class="b" d="M491.5,8.5L493,3H3945V14H493Z"/><text class="t" x="494" y="12.3">00000000000000000000000000000000</text></g>
<g transform="translate(0,1160)"><path class="b" d="M491.5,8.5L493,3H1320L1321.5,8.5L1320,14H493Z M1322.5,8.5L1324,3H3945V14H1324Z"/><text class="t" x="494" y="12.3">00000000000000000000000000000000</text><text class="t" x="1325" y="12.3">00000000000000000000000000010001</text></g>
<g transform="translate(0,1177)"><path class="b" d="M491.5,8.5L493,3H1268L1269.5,8.5L1268,14H493Z M1270.5,8.5L1272,3H3945V14H1272Z"/><text class="t" x="494" y="12.3">00000000000000000000000000000000</text><text class="t" x="1273" y="12.3">00001110000101010001010100010111</text></g>
<g transform="translate(0,1194)"><path class="b" d="M491.5,8.5L493,3H1215L1216.5,8.5L1215,14H493Z M1217.5,8.5L1219,3H3945V14H1219Z"/><text class="t" x="494" y="12.3">00000000000000000000000000000000</text><text class="t" x="1220" y="12.3">00100100001001000010010000010001</text></g>
<g transform="translate(0,1211)"><path class="b" d="M491.5,8.5L493,3H3945V14H493Z"/><text class="t" x="494" y="12.3">00000000000000000000000000000000</text></g>
</g>

<!-- timeline -->
<rect x="491" y="1232" width="3448" height="4" fill="url(#pMin)"/>
<rect x="491" y="1232" width="3448" height="9" fill="url(#pMaj)"/>
<g font-family="Liberation Sans, sans-serif" font-size="11" fill="#1ee01e" text-anchor="middle">
<text x="557" y="1252">0.001 ms</text>
<text x="768" y="1252">0.0012 ms</text>
<text x="979" y="1252">0.0014 ms</text>
<text x="1190" y="1252">0.0016 ms</text>
<text x="1401" y="1252">0.0018 ms</text>
<text x="1613" y="1252">0.002 ms</text>
<text x="1824" y="1252">0.0022 ms</text>
<text x="2035" y="1252">0.0024 ms</text>
<text x="2246" y="1252">0.0026 ms</text>
<text x="2457" y="1252">0.0028 ms</text>
<text x="2668" y="1252">0.003 ms</text>
<text x="2879" y="1252">0.0032 ms</text>
<text x="3090" y="1252">0.0034 ms</text>
<text x="3301" y="1252">0.0036 ms</text>
<text x="3512" y="1252">0.0038 ms</text>
<text x="3724" y="1252">0.004 ms</text>
</g>
<text x="3918" y="1252" font-family="Liberation Sans, sans-serif" font-size="11" fill="#1ee01e">0.004</text>
<rect x="3939" y="1231" width="4" height="43" fill="#d4d4d4"/>

<!-- cursor -->
<rect x="3653" y="0" width="3" height="1255" fill="#ffc800"/>
<rect x="3617.5" y="1255.5" width="73" height="16" fill="#000" stroke="#ffc800"/>
<text x="3620" y="1268" font-family="Liberation Sans, sans-serif" font-size="11" fill="#ffe060">0.0039334 ms</text>
</svg>
</body></html>
